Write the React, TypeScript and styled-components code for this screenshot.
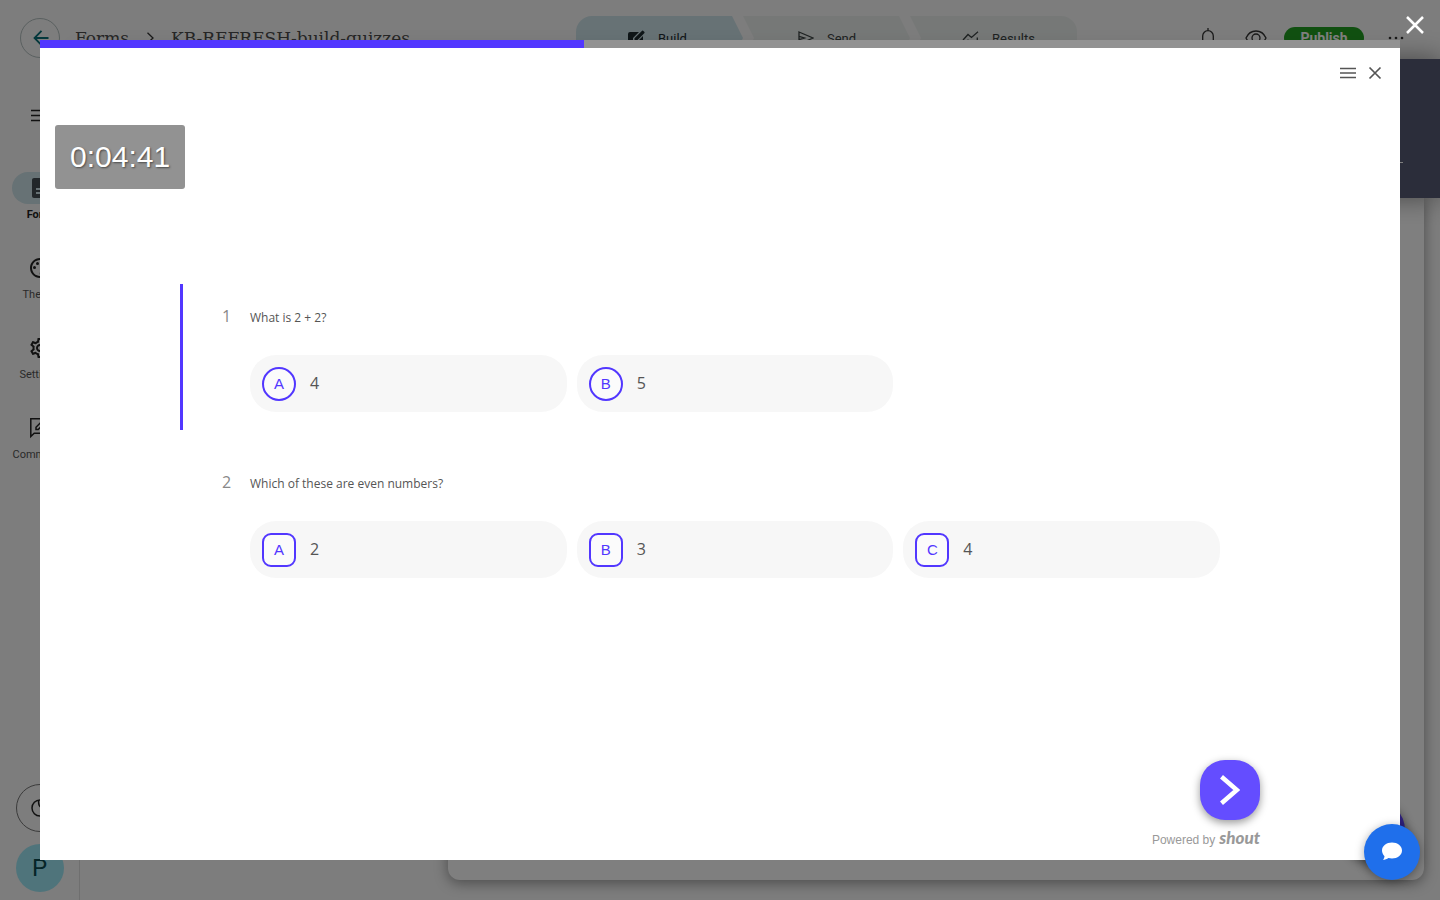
import React from "react";
import styled, { createGlobalStyle } from "styled-components";
import {
  MdOutlinePalette,
  MdOutlineSettings,
  MdDescription,
} from "react-icons/md";

const GlobalStyle = createGlobalStyle`
  *, *::before, *::after { box-sizing: border-box; }
  body { margin: 0; font-family: Roboto, "Liberation Sans", sans-serif; color: #1c1c1c; }
  button { font: inherit; color: inherit; border: 0; padding: 0; background: none; cursor: pointer; }
  svg { display: block; flex: none; }
`;

/* ---------- Form builder behind the preview ---------- */

const Builder = styled.div`
  display: flex;
  flex-direction: column;
  min-height: 100vh;
  background: #fafafa;
`;

const Header = styled.header`
  display: flex;
  height: 59px;
  padding: 16px 34px 0 20px;
`;

const HeaderSide = styled.div`
  flex: 1;
  display: flex;
  align-items: center;
  height: 44px;
`;

const HeaderActions = styled(HeaderSide)`
  flex: none;
`;

const BackButton = styled.button`
  display: flex;
  align-items: center;
  justify-content: center;
  width: 40px;
  height: 40px;
  margin-right: 15px;
  border: 1px solid #b4c0c0;
  border-radius: 50%;
`;

const Crumbs = styled.nav`
  display: flex;
  align-items: center;
  gap: 17px;
  font-family: "DejaVu Serif", serif;
  font-size: 17px;
  line-height: 24px;
  white-space: nowrap;
  color: #4c4c4c;
`;

const CrumbLink = styled.a`
  color: inherit;
  text-decoration: none;
`;

const Steps = styled.nav`
  display: flex;
  width: 501px;
  height: 44px;
  margin-right: 124px;
  border-radius: 16px;
  overflow: hidden;
`;

const Step = styled.button<{ $active?: boolean; $place: "first" | "middle" | "last" }>`
  flex: 1;
  display: flex;
  align-items: center;
  gap: 13px;
  padding-left: 52px;
  background: ${(p) => (p.$active ? "#cee4ea" : "#ecf1ef")};
  color: ${(p) => (p.$active ? "#1d2b30" : "#3c4444")};
  font-size: 13px;
  clip-path: ${(p) =>
    p.$place === "first"
      ? "polygon(0 0, calc(100% - 11px) 0, 100% 50%, calc(100% - 11px) 100%, 0 100%)"
      : p.$place === "middle"
      ? "polygon(0 0, calc(100% - 11px) 0, 100% 50%, calc(100% - 11px) 100%, 0 100%, 11px 50%)"
      : "polygon(0 0, 100% 0, 100% 100%, 0 100%, 11px 50%)"};
`;

const IconButton = styled.button<{ $gap?: number }>`
  display: flex;
  margin-right: ${(p) => p.$gap ?? 0}px;
`;

const PublishButton = styled.button`
  width: 80px;
  height: 22px;
  margin-right: 22px;
  border-radius: 11px;
  background: #22a022;
  color: #fff;
  font-size: 14px;
  font-weight: 700;
  line-height: 22px;
`;

const Body = styled.div`
  flex: 1;
  display: flex;
`;

const Sidebar = styled.aside`
  display: flex;
  flex-direction: column;
  align-items: center;
  width: 80px;
  padding: 48px 0 8px;
  border-right: 1px solid #dedede;
`;

const SideList = styled.nav`
  display: flex;
  flex-direction: column;
  gap: 30px;
  margin-top: 48px;
`;

const SideItem = styled.a<{ $active?: boolean }>`
  display: flex;
  flex-direction: column;
  align-items: center;
  gap: 4px;
  color: ${(p) => (p.$active ? "#222" : "#555")};
  font-size: 11px;
  font-weight: ${(p) => (p.$active ? 700 : 400)};
  line-height: 14px;
  text-decoration: none;
`;

const Pill = styled.span<{ $active?: boolean }>`
  display: flex;
  align-items: center;
  justify-content: center;
  width: 56px;
  height: 32px;
  border-radius: 16px;
  background: ${(p) => (p.$active ? "#cee4ea" : "transparent")};
  color: ${(p) => (p.$active ? "#444f55" : "#222")};
`;

const SideFoot = styled.div`
  display: flex;
  flex-direction: column;
  gap: 12px;
  margin-top: auto;
`;

const RoundButton = styled.button<{ $filled?: boolean }>`
  display: flex;
  align-items: center;
  justify-content: center;
  width: 48px;
  height: 48px;
  border: ${(p) => (p.$filled ? "0" : "1px solid #777")};
  border-radius: 50%;
  background: ${(p) => (p.$filled ? "#9ee8f6" : "transparent")};
  color: #0b4a50;
  font-size: 24px;
`;

const Main = styled.main`
  flex: 1;
  display: flex;
  flex-direction: column;
`;

const Banner = styled.section`
  position: relative;
  height: 139px;
  padding: 103px 37px 0 80px;
  background: #565b74;
  box-shadow: 0 0 24px rgba(0, 0, 0, 0.45);
`;

const BannerRule = styled.hr`
  margin: 0;
  border: 0;
  border-top: 1px solid #fff;
`;

const Sheet = styled.section`
  flex: 1;
  margin: 0 16px 20px 368px;
  border-radius: 0 0 12px 12px;
  background: #fff;
  box-shadow: 0 3px 14px rgba(0, 0, 0, 0.4);
`;

const AddButton = styled.button`
  position: fixed;
  right: 35px;
  bottom: 40px;
  width: 60px;
  height: 60px;
  border-radius: 30px;
  background: #5a3ff0;
  box-shadow: 0 4px 12px rgba(0, 0, 0, 0.6);
`;

/* ---------- Preview dialog ---------- */

const Overlay = styled.div`
  position: fixed;
  inset: 0;
  display: flex;
  padding: 40px;
  background: rgba(0, 0, 0, 0.5);
`;

const OverlayClose = styled.button`
  position: absolute;
  top: 16px;
  right: 16px;
`;

const Dialog = styled.section`
  flex: 1;
  display: flex;
  flex-direction: column;
  overflow: auto;
  background: #fff;
  font-family: "Open Sans", "Noto Sans", sans-serif;
  color: #555;
`;

const Progress = styled.div`
  flex: none;
  height: 8px;
  background: #929292;
`;

const ProgressFill = styled.div`
  height: 100%;
  background: #5237ff;
`;

const DialogTools = styled.div`
  display: flex;
  justify-content: flex-end;
  align-items: center;
  gap: 12px;
  height: 50px;
  padding-right: 18px;
`;

const Timer = styled.div`
  align-self: flex-start;
  margin: 27px 15px 0;
  padding: 0 15px;
  border-radius: 3px;
  background: #929292;
  color: #fff;
  font-family: "Liberation Sans", Arial, sans-serif;
  font-size: 30px;
  line-height: 64px;
  text-shadow: 1px 1px 2px rgba(0, 0, 0, 0.5);
`;

const Column = styled.div`
  width: 100%;
  max-width: 1080px;
  margin: 0 auto;
`;

const Questions = styled(Column).attrs({ as: "form" })`
  display: flex;
  flex-direction: column;
  justify-content: center;
  flex: 1;
  gap: 20px;
  padding-bottom: 69px;
`;

const Question = styled.fieldset<{ $active?: boolean }>`
  min-width: 0;
  margin: 0;
  padding: 20px 40px 18px 67px;
  border: 0;
  border-left: 3px solid ${(p) => (p.$active ? "#5237ff" : "transparent")};
`;

const Legend = styled.legend`
  float: left;
  width: 100%;
  display: flex;
  align-items: baseline;
  height: 24px;
  margin-bottom: 27px;
  padding: 0;
  font-size: 12px;
  line-height: 24px;
`;

const Number = styled.span`
  width: 28px;
  margin-left: -28px;
  font-size: 16px;
  color: #888;
`;

const Options = styled.div`
  clear: both;
  display: grid;
  grid-template-columns: repeat(3, 1fr);
  gap: 10px;
`;

const Option = styled.label`
  display: flex;
  align-items: center;
  gap: 14px;
  height: 57px;
  padding: 0 12px;
  border-radius: 26px;
  background: #f7f7f7;
  font-size: 16px;
  cursor: pointer;
`;

const OptionText = styled.span`
  padding-bottom: 2px;
`;

const HiddenInput = styled.input`
  position: absolute;
  opacity: 0;
  width: 1px;
  height: 1px;
  margin: 0;
`;

const Key = styled.span<{ $round: boolean }>`
  display: flex;
  align-items: center;
  justify-content: center;
  width: 34px;
  height: 34px;
  border: 2px solid #5237ff;
  border-radius: ${(p) => (p.$round ? "50%" : "9px")};
  background: #fbfbfb;
  color: #5237ff;
  font-family: "Liberation Sans", Arial, sans-serif;
  font-size: 15px;
`;

const Footer = styled(Column).attrs({ as: "footer" })`
  display: flex;
  flex-direction: column;
  align-items: flex-end;
  gap: 8px;
  padding-bottom: 12px;
`;

const NextButton = styled.button`
  display: flex;
  align-items: center;
  justify-content: center;
  width: 60px;
  height: 60px;
  border-radius: 25px;
  background: #644dff;
  box-shadow: 0 3px 8px rgba(0, 0, 0, 0.4);
`;

const Powered = styled.a`
  display: flex;
  align-items: baseline;
  gap: 4px;
  height: 20px;
  color: #999;
  font-family: "Liberation Sans", Arial, sans-serif;
  font-size: 12px;
  line-height: 20px;
  text-decoration: none;
`;

const Brand = styled.span`
  font-family: Lato, sans-serif;
  font-size: 17px;
  font-style: italic;
  font-weight: 900;
  line-height: 20px;
`;

const ChatButton = styled.button`
  position: fixed;
  right: 20px;
  bottom: 20px;
  display: flex;
  align-items: center;
  justify-content: center;
  width: 56px;
  height: 56px;
  border-radius: 50%;
  background: #1f6feb;
  box-shadow: 0 2px 10px rgba(0, 0, 0, 0.35);
`;

const CommentIcon = () => (
  <svg width="24" height="24" viewBox="0 0 24 24" fill="none" stroke="currentColor" strokeWidth="1.500">
    <path d="M2.800 20.500V2.800H21.200V17.200H6.200z" />
    <path d="M8 13.500V11.300L14 5.300L16.200 7.500L10.200 13.500z" />
  </svg>
);

const sideItems = [
  { label: "Form", icon: <MdDescription size={24} />, active: true },
  { label: "Theme", icon: <MdOutlinePalette size={24} /> },
  { label: "Settings", icon: <MdOutlineSettings size={24} /> },
  { label: "Comments", icon: <CommentIcon /> },
];

const questions = [
  { text: "What is 2 + 2?", options: ["4", "5"], single: true },
  { text: "Which of these are even numbers?", options: ["2", "3", "4"], single: false },
];

const Cross = ({ size, color, width }: { size: number; color: string; width: number }) => (
  <svg width={size} height={size} viewBox={`0 0 ${size} ${size}`} stroke={color} strokeWidth={width}>
    <path d={`M1 1 L${size - 1} ${size - 1} M${size - 1} 1 L1 ${size - 1}`} />
  </svg>
);

const BuilderPage = () => (
  <Builder>
    <Header>
      <HeaderSide>
        <BackButton aria-label="Back">
          <svg width="18" height="16" viewBox="0 0 18 16" fill="none" stroke="#087078" strokeWidth="1.8">
            <path d="M17.500 8H4M10.500 .8L3.500 8L10.500 15.200" />
          </svg>
        </BackButton>
        <Crumbs aria-label="Breadcrumb">
          <CrumbLink href="#forms">Forms</CrumbLink>
          <svg width="8" height="12" viewBox="0 0 8 12" fill="none" stroke="#333" strokeWidth="1.3">
            <path d="M1.500 .8L7 6L1.500 11.200" />
          </svg>
          <span>KB-REFRESH-build-quizzes</span>
        </Crumbs>
      </HeaderSide>
      <Steps aria-label="Steps">
        <Step $place="first" $active>
          <svg width="17" height="17" viewBox="0 0 17 17">
            <path d="M2 2h9L5 8v4h4l6-6v9a2 2 0 0 1-2 2H2a2 2 0 0 1-2-2V4a2 2 0 0 1 2-2z" fill="#1d2b30" />
            <path d="M6.500 10.500V8.300L13.600 1.200a1.300 1.300 0 0 1 2 0l.4.4a1.300 1.300 0 0 1 0 2L9 10.500z" fill="#1d2b30" />
          </svg>
          Build
        </Step>
        <Step $place="middle">
          <svg width="19" height="14" viewBox="0 0 19 14" fill="none" stroke="#3c4444" strokeWidth="1.3">
            <path d="M4 1l14 6L4 13zM4 5.300L9.500 7L4 8.700" />
          </svg>
          Send
        </Step>
        <Step $place="last">
          <svg width="17" height="15" viewBox="0 0 17 15" fill="none" stroke="#3c4444" strokeWidth="1.3">
            <path d="M1 9l5-5.500 3.500 3L16 .8M1.500 11.500V15M6 8.500V15M10.500 10V15M15.300 6.500V15" />
          </svg>
          Results
        </Step>
      </Steps>
      <HeaderActions>
        <IconButton $gap={30} aria-label="Notifications">
          <svg width="14" height="20" viewBox="0 0 14 20" fill="none" stroke="#333" strokeWidth="1.3">
            <path d="M7 0v3M1.700 16V8a5.300 5.300 0 0 1 10.600 0v8M0 16h14M5 18h4" />
          </svg>
        </IconButton>
        <IconButton $gap={17} aria-label="Preview">
          <svg width="22" height="16" viewBox="0 0 22 16" fill="none" stroke="#333" strokeWidth="1.3">
            <path d="M1 8C3 3.500 6.500 1 11 1s8 2.500 10 7c-2 4.500-5.500 7-10 7S3 12.500 1 8z" />
            <circle cx="11" cy="8" r="4" />
          </svg>
        </IconButton>
        <PublishButton>Publish</PublishButton>
        <IconButton aria-label="More">
          <svg width="20" height="4" viewBox="0 0 20 4" fill="#333">
            <circle cx="4" cy="2" r="1.300" />
            <circle cx="10" cy="2" r="1.300" />
            <circle cx="16" cy="2" r="1.300" />
          </svg>
        </IconButton>
      </HeaderActions>
    </Header>
    <Body>
      <Sidebar>
        <IconButton aria-label="Menu">
          <svg width="18" height="17" viewBox="0 0 18 17" stroke="#222" strokeWidth="1.5">
            <path d="M0 3.500h18M0 8.500h18M0 13.500h18" />
          </svg>
        </IconButton>
        <SideList>
          {sideItems.map((item) => (
            <SideItem key={item.label} href={`#${item.label}`} $active={item.active}>
              <Pill $active={item.active}>{item.icon}</Pill>
              {item.label}
            </SideItem>
          ))}
        </SideList>
        <SideFoot>
          <RoundButton aria-label="Usage">
            <svg width="18" height="18" viewBox="0 0 18 18" fill="none" stroke="#222" strokeWidth="1.500">
              <path d="M9 1a8 8 0 1 0 8 8M7.500 1c0 4 0 8 6 8" />
            </svg>
          </RoundButton>
          <RoundButton $filled>P</RoundButton>
        </SideFoot>
      </Sidebar>
      <Main>
        <Banner>
          <BannerRule />
        </Banner>
        <Sheet />
      </Main>
    </Body>
    <AddButton aria-label="Add" />
  </Builder>
);

const QuizPreview = () => (
  <Overlay>
    <Dialog role="dialog" aria-label="Quiz preview">
      <Progress role="progressbar" aria-valuenow={40}>
        <ProgressFill style={{ width: "40%" }} />
      </Progress>
      <DialogTools>
        <IconButton aria-label="Menu">
          <svg width="16" height="12" viewBox="0 0 16 12" stroke="#555" strokeWidth="1.600">
            <path d="M0 1.500h16M0 6h16M0 10.500h16" />
          </svg>
        </IconButton>
        <IconButton aria-label="Close form">
          <svg width="14" height="14" viewBox="0 0 14 14" stroke="#555" strokeWidth="1.700">
            <path d="M1.500 1.500l11 11M12.500 1.500l-11 11" />
          </svg>
        </IconButton>
      </DialogTools>
      <Timer role="timer">0:04:41</Timer>
      <Questions>
        {questions.map((q, i) => (
          <Question key={q.text} $active={i === 0}>
            <Legend>
              <Number>{i + 1}</Number>
              {q.text}
            </Legend>
            <Options>
              {q.options.map((option, n) => (
                <Option key={option}>
                  <HiddenInput type={q.single ? "radio" : "checkbox"} name={`q${i}`} />
                  <Key $round={q.single}>{"ABC"[n]}</Key>
                  <OptionText>{option}</OptionText>
                </Option>
              ))}
            </Options>
          </Question>
        ))}
      </Questions>
      <Footer>
        <NextButton aria-label="Next">
          <svg width="20" height="30" viewBox="0 0 20 30" fill="none" stroke="#fff" strokeWidth="4.500">
            <path d="M1.500 1.800L16.800 15L1.500 28.200" />
          </svg>
        </NextButton>
        <Powered href="#shout">
          Powered by <Brand>shout</Brand>
        </Powered>
      </Footer>
    </Dialog>
    <OverlayClose aria-label="Close preview">
      <Cross size={18} color="#fff" width={2.5} />
    </OverlayClose>
  </Overlay>
);

export default function App() {
  return (
    <>
      <GlobalStyle />
      <BuilderPage />
      <QuizPreview />
      <ChatButton aria-label="Chat">
        <svg width="20" height="20" viewBox="0 0 20 20" fill="#fff">
          <path d="M10 .5c5.500 0 10 3.500 10 8s-4.500 8-10 8c-1.300 0-2.500-.2-3.600-.5C5 17 3 17.800 1 17.800c.9-1 1.400-2.300 1.500-3.600C1 12.700 0 10.700 0 8.500c0-4.500 4.500-8 10-8z" />
        </svg>
      </ChatButton>
    </>
  );
}
